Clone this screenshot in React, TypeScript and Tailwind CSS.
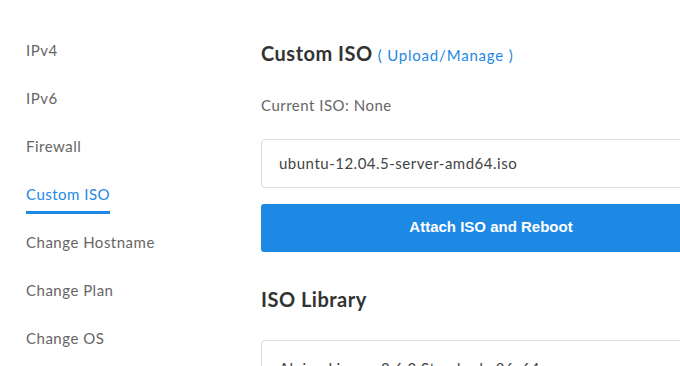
import React from 'react';

const navItems = ['IPv4', 'IPv6', 'Firewall', 'Custom ISO', 'Change Hostname', 'Change Plan', 'Change OS'];

const App: React.FC = () => {
  return (
    <div className="w-[680px] h-[366px] overflow-hidden bg-white flex font-['Lato',sans-serif] tracking-[0.5px]">
      {/* Sidebar */}
      <div className="w-[261px] shrink-0 pl-[26px] pt-[26px]">
        {navItems.map((item) => {
          const active = item === 'Custom ISO';
          return (
            <div key={item} className="h-[48px] flex flex-col justify-center">
              <div className="relative w-fit">
                <span className={active ? 'text-[15px] text-[#1e88e5]' : 'text-[15px] text-[#666]'}>{item}</span>
                {active && <div className="absolute left-0 right-0 top-[29px] h-[3px] bg-[#1e88e5]"></div>}
              </div>
            </div>
          );
        })}
      </div>

      {/* Main */}
      <div className="w-[460px] shrink-0 pt-[38px]">
        <div className="flex items-baseline gap-[5px] h-[28px]">
          <h2 className="text-[20px] font-bold text-[#333]">Custom ISO</h2>
          <a className="text-[15px] text-[#1e88e5] tracking-[0.8px]">( Upload/Manage )</a>
        </div>

        <div className="mt-[28px] text-[15px] text-[#666]">Current ISO: None</div>

        <div className="mt-[22px] h-[49px] border border-[#ddd] rounded-[4px] flex items-center pl-[17px] text-[15px] text-[#444]">
          ubuntu-12.04.5-server-amd64.iso
        </div>

        <button className="mt-[16px] w-full h-[48px] bg-[#1e88e5] rounded-[3px] text-white text-[15px] font-bold tracking-normal font-['Liberation_Sans',sans-serif]">
          Attach ISO and Reboot
        </button>

        <h2 className="mt-[32px] text-[20px] font-bold text-[#333]">ISO Library</h2>

        <div className="mt-[26px] h-[60px] border border-[#ddd] rounded-[4px] pl-[17px] pt-[16px] text-[15px] text-[#444]">
          Alpine Linux - 3.6.2 Standard x86_64
        </div>
      </div>
    </div>
  );
};

export default App;
